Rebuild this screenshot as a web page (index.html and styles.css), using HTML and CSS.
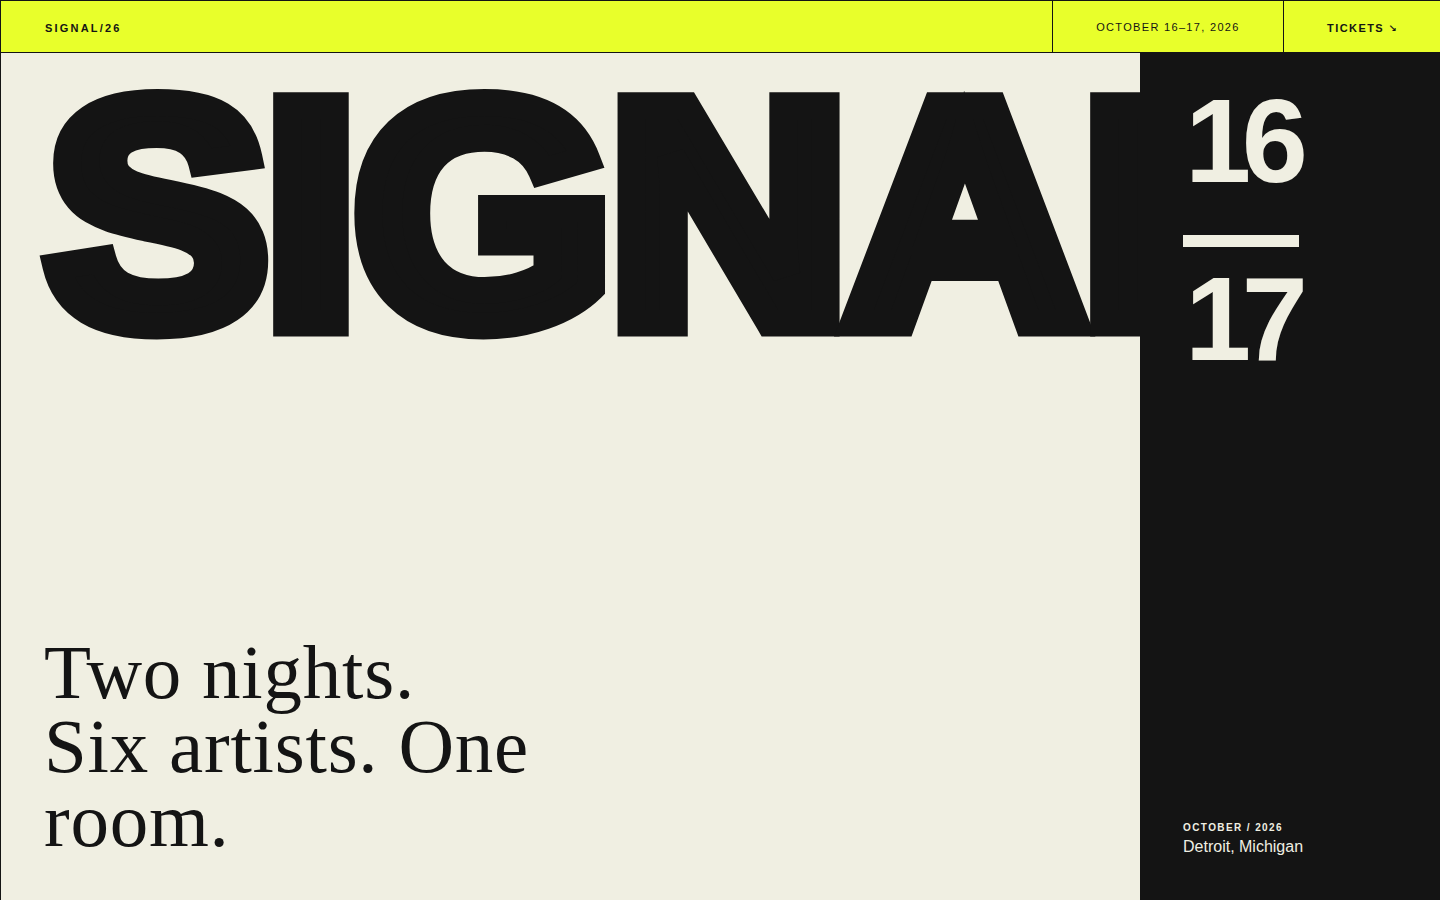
FILE: index.html
```html
<!DOCTYPE html>
<html lang="en">
<head>
<meta charset="utf-8">
<title>SIGNAL/26 — October 16–17, 2026</title>
<link rel="stylesheet" href="styles.css">
</head>
<body>
<div class="page">
  <header class="topbar">
    <div class="brand">SIGNAL/26</div>
    <div class="cell cell-date">OCTOBER 16–17, 2026</div>
    <a class="cell cell-tickets" href="#tickets"><span class="tickets-label">TICKETS <span class="arrow">↘</span></span></a>
  </header>
  <main class="hero">
    <section class="hero-left">
      <h1 class="wordmark">SIGNAL</h1>
      <p class="tagline">Two nights.<br>Six artists. One<br>room.</p>
    </section>
    <aside class="hero-right">
      <div class="dates">
        <div class="day">16</div>
        <div class="dash"></div>
        <div class="day">17</div>
      </div>
      <div class="place">
        <div class="place-label">OCTOBER / 2026</div>
        <div class="place-city">Detroit, Michigan</div>
      </div>
    </aside>
  </main>
</div>
</body>
</html>
```

FILE: styles.css
```css
* { box-sizing: border-box; }

html, body {
  margin: 0;
  padding: 0;
  background: #f0efe2;
}

body {
  font-family: "Liberation Sans", Arial, sans-serif;
  color: #141414;
  overflow: hidden;
}

.page {
  width: 1440px;
  height: 900px;
  border-top: 1px solid #141414;
  border-left: 1px solid #141414;
  display: flex;
  flex-direction: column;
}

.topbar {
  height: 52px;
  flex: none;
  display: flex;
  background: #e8ff2b;
  border-bottom: 1px solid #141414;
}

.brand {
  flex: 1;
  display: flex;
  align-items: center;
  padding-left: 44px;
  padding-top: 2px;
  font-weight: 700;
  font-size: 11px;
  letter-spacing: 0.2em;
}

.cell {
  display: flex;
  align-items: center;
  justify-content: center;
  border-left: 1px solid #141414;
  font-size: 11px;
  color: #141414;
  text-decoration: none;
}

.cell-date {
  width: 231px;
  letter-spacing: 0.12em;
}

.cell-tickets {
  width: 157px;
  padding-top: 2px;
}

.tickets-label {
  font-weight: 700;
  letter-spacing: 0.13em;
  white-space: nowrap;
}

.arrow {
  font-family: "DejaVu Sans", sans-serif;
  font-weight: 700;
  font-size: 10px;
  letter-spacing: 0;
}

.hero {
  flex: 1;
  display: flex;
  min-height: 0;
}

.hero-left {
  flex: 1;
  min-width: 0;
  overflow: hidden;
  display: flex;
  flex-direction: column;
  justify-content: space-between;
  padding: 3px 0 43px 43px;
}

.wordmark {
  margin: 0 0 0 3px;
  font-family: "Liberation Sans", Arial, sans-serif;
  font-weight: 700;
  font-size: 330px;
  line-height: 1;
  letter-spacing: -2px;
  white-space: nowrap;
  color: #141414;
  -webkit-text-stroke: 28px #141414;
  transform: scaleY(0.957);
  transform-origin: 0 0;
  height: 320px;
}

.tagline {
  margin: 0;
  font-family: "Liberation Serif", Georgia, serif;
  font-weight: 400;
  font-size: 77px;
  line-height: 74px;
  letter-spacing: 0.01em;
  color: #141414;
}

.hero-right {
  width: 300px;
  flex: none;
  background: #141414;
  color: #f0efe2;
  display: flex;
  flex-direction: column;
  justify-content: space-between;
  padding: 28px 0 43px 43px;
}

.dates {
  display: flex;
  flex-direction: column;
  align-items: flex-start;
}

.day {
  font-weight: 700;
  font-size: 119px;
  line-height: 1;
  letter-spacing: -0.08em;
  padding-left: 2px;
}

.dash {
  width: 116px;
  height: 12px;
  background: #f0efe2;
  margin: 35px 0 12px;
}

.place-label {
  font-weight: 700;
  font-size: 10px;
  line-height: 12px;
  letter-spacing: 0.14em;
  margin-bottom: 3px;
}

.place-city {
  font-size: 16px;
  line-height: 20px;
}
```
